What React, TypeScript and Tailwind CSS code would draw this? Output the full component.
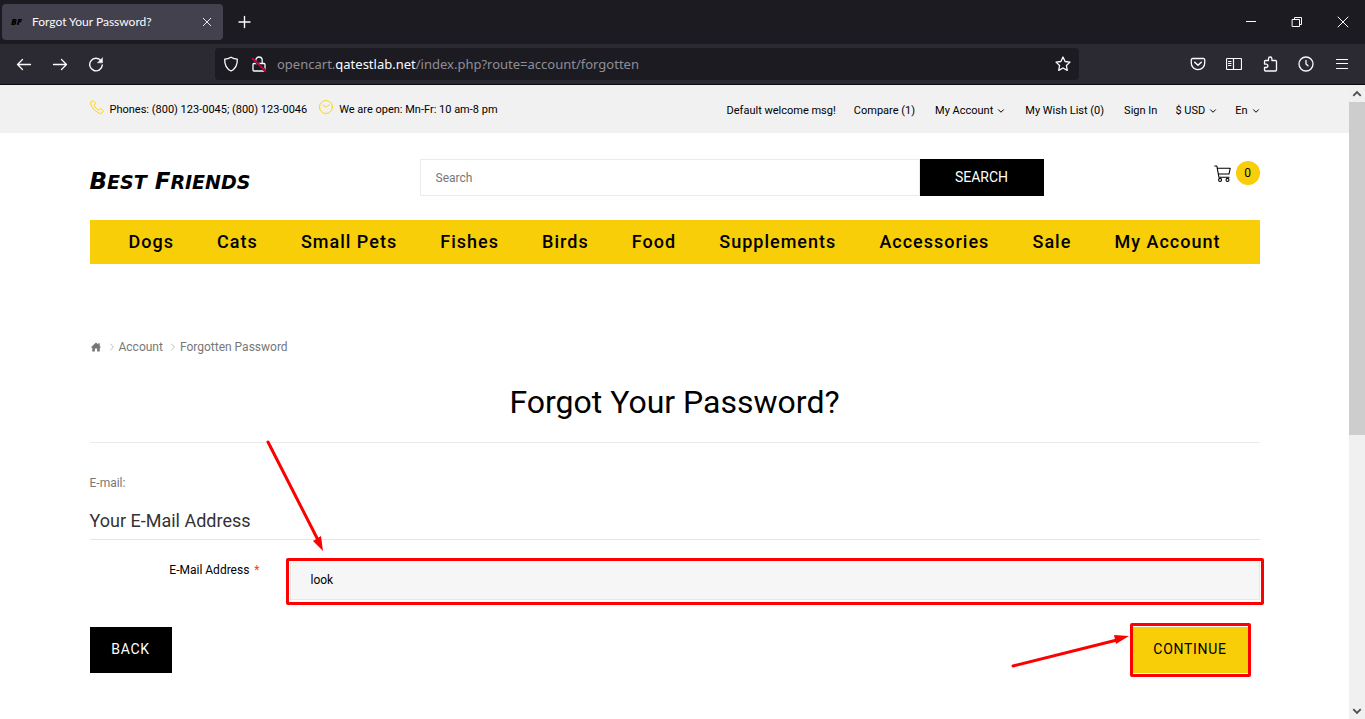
import type { ReactNode } from 'react';

const NAV = ['Dogs', 'Cats', 'Small Pets', 'Fishes', 'Birds', 'Food', 'Supplements', 'Accessories', 'Sale', 'My Account'];

function Icon({ children, className = 'size-4', label }: { children: ReactNode; className?: string; label?: string }) {
  return (
    <svg
      viewBox="0 0 16 16"
      className={`shrink-0 ${className}`}
      fill="none"
      stroke="currentColor"
      strokeWidth="1.2"
      strokeLinecap="round"
      strokeLinejoin="round"
      aria-hidden={!label}
      aria-label={label}
    >
      {children}
    </svg>
  );
}

function ToolButton({ label, children }: { label: string; children: ReactNode }) {
  return (
    <button type="button" aria-label={label} className="flex size-9 items-center justify-center">
      {children}
    </button>
  );
}

function TabBar() {
  return (
    <div className="flex h-11 items-center bg-[#1c1b22] pl-[2px] text-[#fbfbfe]">
      <div className="flex h-9 w-[221px] items-center rounded bg-[#42414d] pr-[10px] pl-[9px]">
        <span className="w-[21px] font-['Open_Sans',sans-serif] text-[9px] font-extrabold text-black italic">BF</span>
        <span className="flex-1 font-[Lato,sans-serif] text-[12px]">Forgot Your Password?</span>
        <button type="button" aria-label="Close tab">
          <Icon className="size-3">
            <path d="M3 3l10 10M13 3L3 13" />
          </Icon>
        </button>
      </div>
      <button type="button" aria-label="New tab" className="ml-[14px]">
        <Icon>
          <path d="M7.500 2.500v11M2 8h11" strokeWidth="1.4" />
        </Icon>
      </button>
      <div className="ml-auto flex">
        <button type="button" aria-label="Minimize" className="flex w-[46px] justify-center">
          <Icon>
            <path d="M3 7.5h10" strokeWidth="1" strokeLinecap="butt" />
          </Icon>
        </button>
        <button type="button" aria-label="Restore" className="flex w-[46px] justify-center">
          <Icon>
            <path d="M3.5 5.5h7v7h-7zM5.500 5.500v-2h7v7h-2" strokeWidth="1" />
          </Icon>
        </button>
        <button type="button" aria-label="Close" className="flex w-[45px] justify-center">
          <Icon>
            <path d="M3 3l10 10M13 3L3 13" strokeWidth="1" />
          </Icon>
        </button>
      </div>
    </div>
  );
}

function Toolbar() {
  return (
    <div className="flex h-[41px] items-center border-b border-[#0c0c0d] bg-[#2b2a33] pr-[5px] pl-[6px] text-[#fbfbfe]">
      <div className="flex w-[209px]">
        <ToolButton label="Back">
          <Icon>
            <path d="M14.500 8.500h-13M6.500 3.500l-5 5 5 5" strokeWidth="1.300" />
          </Icon>
        </ToolButton>
        <ToolButton label="Forward">
          <Icon>
            <path d="M1.500 8.500h13M9.500 3.500l5 5-5 5" strokeWidth="1.300" />
          </Icon>
        </ToolButton>
        <ToolButton label="Reload">
          <Icon>
            <path d="M13 4.700A6.300 6.300 0 1 0 14.300 9" strokeWidth="1.400" />
            <path d="M14.500 2v4.800H9.700z" fill="currentColor" strokeWidth="0.500" />
          </Icon>
        </ToolButton>
      </div>
      <div className="flex h-8 w-[864px] shrink items-center rounded bg-[#1c1b22] px-2">
        <Icon label="Tracking protection">
          <path d="M8 1.200c2 1.300 4 1.900 6.300 1.900C14.500 8.500 13 12.800 8 15 3 12.800 1.500 8.500 1.700 3.100 4 3.100 6 2.500 8 1.200z" strokeWidth="1.300" />
        </Icon>
        <Icon className="ml-3 size-4" label="Connection not secure">
          <path d="M4.800 7V4.200a3.200 3.200 0 0 1 6.400 0V7M3 7.500h10a1 1 0 0 1 1 1V14a1 1 0 0 1-1 1H3a1 1 0 0 1-1-1V8.500a1 1 0 0 1 1-1z" strokeWidth="1.300" />
          <path d="M1.500 2.500l13 12.500" stroke="#1c1b22" strokeWidth="2.500" />
          <path d="M1.500 2.500l13 12.500" stroke="#e8003c" strokeWidth="1.600" />
        </Icon>
        <div className="ml-[10px] flex-1 pt-[2px] font-['Noto_Sans',sans-serif] text-[13px] text-[#8f8e96]">
          opencart.<span className="text-[#fbfbfe]">qatestlab.net</span>/index.php?route=account/forgotten
        </div>
        <button type="button" aria-label="Bookmark this page">
          <Icon>
            <path d="M8 1l2.100 4.500 4.900.6-3.600 3.400.9 4.900L8 12l-4.300 2.400.9-4.900L1 6.100l4.900-.6z" strokeWidth="1.300" />
          </Icon>
        </button>
      </div>
      <div className="ml-auto flex">
        <ToolButton label="Pocket">
          <Icon>
            <path d="M2.500 2.500h11a1.200 1.200 0 0 1 1.200 1.200v3.500a6.700 6.500 0 0 1-13.400 0V3.700a1.200 1.200 0 0 1 1.200-1.200z" strokeWidth="1.300" />
            <path d="M4.700 6.300L8 9.300l3.300-3" strokeWidth="1.500" />
          </Icon>
        </ToolButton>
        <ToolButton label="Sidebar">
          <Icon>
            <path d="M1.500 2.500h13a1 1 0 0 1 1 1v9a1 1 0 0 1-1 1h-13a1 1 0 0 1-1-1v-9a1 1 0 0 1 1-1zM7.500 2.500v11M2.500 5.500h2.500M2.500 7.500h2.500M2.500 9.500h2.500" />
          </Icon>
        </ToolButton>
        <ToolButton label="Extensions">
          <Icon>
            <path d="M2.500 8V5.500a1 1 0 0 1 1-1h3V2.700a1.700 1.700 0 0 1 3.400 0v1.800h3.600a1 1 0 0 1 1 1V14a1 1 0 0 1-1 1h-10a1 1 0 0 1-1-1v-2.500h1.700a1.700 1.700 0 0 0 0-3.400H2.500" strokeWidth="1.300" />
          </Icon>
        </ToolButton>
        <ToolButton label="History">
          <Icon>
            <circle cx="8" cy="8" r="7" strokeWidth="1.300" />
            <path d="M8 4.500V8l2 1.800" strokeWidth="1.300" />
          </Icon>
        </ToolButton>
        <ToolButton label="Menu">
          <Icon>
            <path d="M2.500 3.500h11M2.500 7.500h11M2.500 12.500h11" />
          </Icon>
        </ToolButton>
      </div>
    </div>
  );
}

function Chevron() {
  return (
    <Icon className="size-2">
      <path d="M3 5.500l5 5 5-5" strokeWidth="2" />
    </Icon>
  );
}

function TopLink({ children, menu }: { children: ReactNode; menu?: boolean }) {
  return (
    <a href="#" className="flex items-center gap-1">
      {children}
      {menu && <Chevron />}
    </a>
  );
}

function TopStrip() {
  return (
    <div className="bg-[#f1f1f1] text-[11px] leading-4 text-black">
      <div className="mx-auto flex h-12 max-w-[1170px] items-center">
        <div className="flex items-center pt-[2px]">
          <Icon className="mr-[6px] mb-[6px] size-[14px] text-[#f8ce08]">
            <path d="M1 2.500L2.600 1c.5-.4 1-.3 1.400.1l2 2.300c.4.500.4 1-.1 1.400L4.600 6c.8 2 3 4.400 5.300 5.500l1.300-1.300c.4-.4 1-.4 1.400 0l2.300 2c.4.400.4 1 0 1.400l-1.400 1.400c-.5.500-1.200.6-1.900.4C6.500 13.600 2.300 9.500.7 4.300.5 3.600.6 3 1 2.500z" strokeWidth="1" />
          </Icon>
          Phones: (800) 123-0045; (800) 123-0046
          <Icon className="mr-[6px] mb-[6px] ml-3 size-[14px] text-[#f8ce08]">
            <circle cx="8" cy="8" r="7.400" strokeWidth="1" />
            <path d="M4.500 5.800L8 8l4-2.300" strokeWidth="1" />
          </Icon>
          We are open: Mn-Fr: 10 am-8 pm
        </div>
        <div className="ml-auto flex items-center pt-1">
          <span className="mr-[18px]">Default welcome msg!</span>
          <nav aria-label="Account links" className="flex items-center gap-5">
            <TopLink>Compare (1)</TopLink>
            <TopLink menu>My Account</TopLink>
            <TopLink>My Wish List (0)</TopLink>
            <TopLink>Sign In</TopLink>
          </nav>
          <div className="ml-[18px] flex gap-[18px]">
            <TopLink menu>$ USD</TopLink>
            <TopLink menu>En</TopLink>
          </div>
        </div>
      </div>
    </div>
  );
}

function StoreHeader() {
  return (
    <header>
      <div className="flex items-start pt-[26px]">
        <a
          href="#"
          className="flex w-[330px] gap-2 pt-2 font-['DejaVu_Sans',sans-serif] text-[19px] leading-7 font-bold text-black uppercase italic"
        >
          <span className="block first-letter:text-[23px]">Best</span>
          <span className="block first-letter:text-[23px]">Friends</span>
        </a>
        <form className="flex w-[624px]" role="search" onSubmit={(e) => e.preventDefault()}>
          <input
            type="search"
            aria-label="Search"
            placeholder="Search"
            className="h-[37px] min-w-0 flex-1 border border-[#ebebeb] px-[15px] text-[12px] outline-none placeholder:text-[#777]"
          />
          <button type="submit" className="w-[124px] bg-black text-[14px] text-white">
            SEARCH
          </button>
        </form>
        <a href="#" aria-label="Cart" className="mt-[2px] ml-auto flex items-center gap-[5px] text-black">
          <Icon className="size-[17px]">
            <path d="M.7 1h2l1.900 10.500h9.600M3 3h12.300l-1.200 5.500H4.200" strokeWidth="1" />
            <circle cx="5.700" cy="14" r="1.400" strokeWidth="1" />
            <circle cx="12.700" cy="14" r="1.400" strokeWidth="1" />
          </Icon>
          <span className="flex size-6 items-center justify-center rounded-full bg-[#f8ce08] text-[12px]">0</span>
        </a>
      </div>
      <nav aria-label="Categories" className="mt-6 flex h-11 items-center justify-between bg-[#f8ce08] px-[39px] pb-[2px] text-[18px] font-medium tracking-[1px] text-black">
        {NAV.map((item) => (
          <a key={item} href="#">
            {item}
          </a>
        ))}
      </nav>
    </header>
  );
}

function Crumb({ children }: { children: ReactNode }) {
  return (
    <li className="flex items-center gap-[3px]">
      <Icon className="size-2 text-[#bbb]">
        <path d="M5 2l6 6-6 6" strokeWidth="2" />
      </Icon>
      <a href="#">{children}</a>
    </li>
  );
}

function ForgottenForm() {
  return (
    <main>
      <nav aria-label="Breadcrumb" className="mt-[75px]">
        <ol className="flex h-4 items-center gap-[6px] text-[12px] text-[#777]">
          <li>
            <a href="#" aria-label="Home">
              <svg viewBox="0 0 16 16" className="size-3" fill="currentColor" aria-hidden="true">
                <path d="M8 2L1 8.500h2V14h3.500v-4h3v4H13V8.500h2l-2-1.900V3h-2v1.800z" />
              </svg>
            </a>
          </li>
          <Crumb>Account</Crumb>
          <Crumb>Forgotten Password</Crumb>
        </ol>
      </nav>
      <h1 className="mt-[27px] border-b border-[#ebebeb] pb-5 text-center text-[32px] leading-10 text-black">Forgot Your Password?</h1>
      <p className="mt-8 text-[12px] leading-4 text-[#777]">E-mail:</p>
      <form onSubmit={(e) => e.preventDefault()}>
        <fieldset className="mt-[18px]">
          <legend className="w-full border-b border-[#e5e5e5] pb-[6px] text-[18px] leading-6 text-[#333]">Your E-Mail Address</legend>
          <div className="mt-5 flex">
            <label htmlFor="email" className="w-[170px] text-right text-[12px] leading-5 text-black">
              E-Mail Address <span className="ml-[2px] text-[#f23b2f]">*</span>
            </label>
            <div className="relative ml-[30px] flex-1">
              <input
                id="email"
                type="text"
                defaultValue="look"
                className="block h-10 w-full border border-[#e8e8e8] bg-[#f6f6f6] px-5 text-[12px] text-black outline-none"
              />
              <div className="pointer-events-none absolute -top-[2px] -right-1 -bottom-[5px] -left-1 rounded-[2px] border-3 border-[#ff0000]" />
              <svg viewBox="0 0 58 112" className="absolute -top-[120px] -left-[24px] h-[112px] w-[58px]" aria-hidden="true">
                <path d="M2 2l50 98" stroke="#f00" strokeWidth="3" strokeLinecap="round" />
                <path d="M57 111L47 101l8-5z" fill="#f00" />
              </svg>
            </div>
          </div>
        </fieldset>
        <div className="mt-[27px] flex items-center justify-between pr-3">
          <button type="button" className="h-[46px] w-[82px] bg-black pb-[2px] text-[14px] tracking-wider text-white">
            BACK
          </button>
          <div className="relative">
            <button type="submit" className="h-[46px] w-[115px] bg-[#f8ce08] pb-[2px] text-[14px] tracking-wider text-black">
              CONTINUE
            </button>
            <div className="pointer-events-none absolute -top-1 -right-[3px] -bottom-1 -left-[3px] rounded-[2px] border-3 border-[#ff0000]" />
            <svg viewBox="0 0 120 34" className="absolute top-[7px] -left-[123px] h-[34px] w-[120px]" aria-hidden="true">
              <path d="M3 32l104-26" stroke="#f00" strokeWidth="3" strokeLinecap="round" />
              <path d="M119 2L104 1l2 9z" fill="#f00" />
            </svg>
          </div>
        </div>
      </form>
    </main>
  );
}

function Scrollbar() {
  return (
    <div className="flex w-4 shrink-0 flex-col items-center bg-[#f0f0f0] text-[#505050]" aria-hidden="true">
      <div className="flex h-[17px] items-center">
        <Icon className="size-3">
          <path d="M3 10.500l5-5 5 5" strokeWidth="2.500" strokeLinecap="butt" strokeLinejoin="miter" />
        </Icon>
      </div>
      <div className="flex w-full flex-1 flex-col">
        <div className="grow-[333] basis-0 bg-[#cdcdcd]" />
        <div className="grow-[268] basis-0" />
      </div>
      <div className="flex h-4 items-center">
        <Icon className="size-3">
          <path d="M3 5.500l5 5 5-5" strokeWidth="2.500" strokeLinecap="butt" strokeLinejoin="miter" />
        </Icon>
      </div>
    </div>
  );
}

export default function App() {
  return (
    <div className="flex h-screen flex-col overflow-hidden bg-white font-[Roboto,sans-serif]">
      <TabBar />
      <Toolbar />
      <div className="flex min-h-0 flex-1">
        <div className="min-w-0 flex-1 overflow-hidden">
          <TopStrip />
          <div className="mx-auto max-w-[1170px]">
            <StoreHeader />
            <ForgottenForm />
          </div>
        </div>
        <Scrollbar />
      </div>
    </div>
  );
}
